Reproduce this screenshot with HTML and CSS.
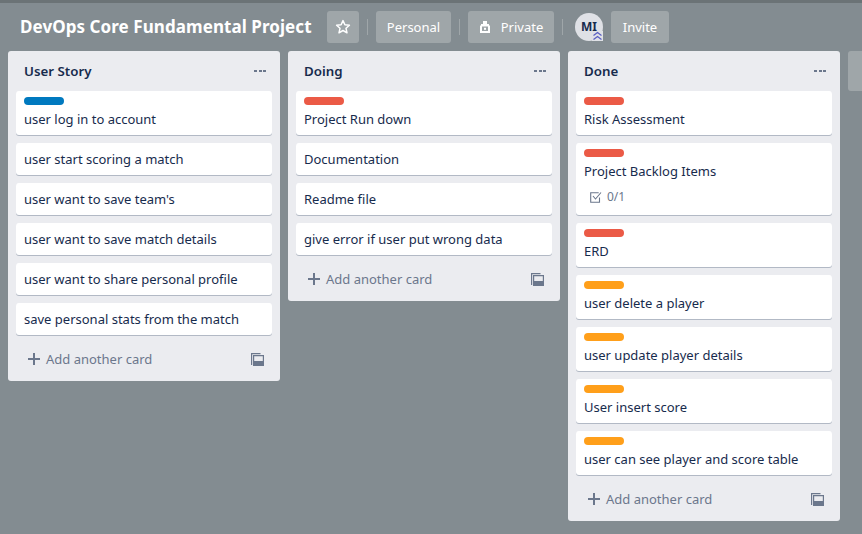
FILE: index.html
```html
<!DOCTYPE html>
<html lang="en">
<head>
    <meta charset="UTF-8">
    <meta name="viewport" content="width=device-width, initial-scale=1.0">
    <title>DevOps Core Fundamental Project</title>
    <link rel="stylesheet" href="styles.css">
</head>
<body>
    <div class="top-strip"></div>

    <div class="board-header">
        <h1 class="board-title">DevOps Core Fundamental Project</h1>
        <button class="header-btn star-btn">
            <svg width="16" height="16" viewBox="0 0 16 16"><path d="M8 1.600l1.900 4.200 4.500.5-3.400 3 1 4.500L8 11.500l-4 2.300 1-4.500-3.400-3 4.500-.5z" fill="none" stroke="#fff" stroke-width="1.500" stroke-linejoin="round"/></svg>
        </button>
        <span class="divider"></span>
        <button class="header-btn personal-btn">Personal</button>
        <span class="divider"></span>
        <button class="header-btn private-btn">
            <svg width="12" height="14" viewBox="0 0 12 14"><path d="M4 1h4v3h2v1.500H11V13H1V5.500h1V4h2z" fill="#fff"/><rect x="3" y="6.500" width="6" height="4.500" fill="#9fa6a9"/><rect x="5" y="7.800" width="2" height="2" fill="#fff"/></svg>
            Private
        </button>
        <span class="divider"></span>
        <div class="avatar">
            MI
            <svg class="avatar-badge" width="11" height="10" viewBox="0 0 11 10"><path d="M1.500 4.500L5.500 1.500l4 3M1.500 8.500l4-3 4 3" fill="none" stroke="#5a5fc4" stroke-width="1.300"/></svg>
        </div>
        <button class="header-btn invite-btn">Invite</button>
    </div>

    <div class="board">
        <div class="list">
            <div class="list-header"><h2>User Story</h2><span class="menu-dots"><i></i><i></i><i></i></span></div>
            <div class="card"><span class="label blue"></span><p>user log in to account</p></div>
            <div class="card"><p>user start scoring a match</p></div>
            <div class="card"><p>user want to save team's</p></div>
            <div class="card"><p>user want to save match details</p></div>
            <div class="card"><p>user want to share personal profile</p></div>
            <div class="card"><p>save personal stats from the match</p></div>
            <div class="add-row">
                <svg class="plus" width="14" height="14" viewBox="0 0 14 14"><path d="M6 1h2v5h5v2H8v5H6V8H1V6h5z" fill="#6b778c"/></svg>
                <span>Add another card</span>
                <svg class="template" width="13" height="13" viewBox="0 0 13 13"><path d="M9.500.600H.600V12M2.600 2.600h9.800v9.800H2.600z" fill="none" stroke="#6b778c" stroke-width="1.200"/><rect x="3" y="8" width="9" height="4" fill="#6b778c"/></svg>
            </div>
        </div>

        <div class="list">
            <div class="list-header"><h2>Doing</h2><span class="menu-dots"><i></i><i></i><i></i></span></div>
            <div class="card"><span class="label red"></span><p>Project Run down</p></div>
            <div class="card"><p>Documentation</p></div>
            <div class="card"><p>Readme file</p></div>
            <div class="card"><p>give error if user put wrong data</p></div>
            <div class="add-row">
                <svg class="plus" width="14" height="14" viewBox="0 0 14 14"><path d="M6 1h2v5h5v2H8v5H6V8H1V6h5z" fill="#6b778c"/></svg>
                <span>Add another card</span>
                <svg class="template" width="13" height="13" viewBox="0 0 13 13"><path d="M9.500.600H.600V12M2.600 2.600h9.800v9.800H2.600z" fill="none" stroke="#6b778c" stroke-width="1.200"/><rect x="3" y="8" width="9" height="4" fill="#6b778c"/></svg>
            </div>
        </div>

        <div class="list">
            <div class="list-header"><h2>Done</h2><span class="menu-dots"><i></i><i></i><i></i></span></div>
            <div class="card"><span class="label red"></span><p>Risk Assessment</p></div>
            <div class="card">
                <span class="label red"></span>
                <p>Project Backlog Items</p>
                <div class="badges">
                    <svg width="12" height="12" viewBox="0 0 12 12"><path d="M9.500 6.500v4.800H.700V1.700h8" fill="none" stroke="#6b778c" stroke-width="1.100"/><path d="M3 5l2.500 3L11 1.500" fill="none" stroke="#6b778c" stroke-width="1.100"/></svg>
                    <span>0/1</span>
                </div>
            </div>
            <div class="card"><span class="label red"></span><p>ERD</p></div>
            <div class="card"><span class="label orange"></span><p>user delete a player</p></div>
            <div class="card"><span class="label orange"></span><p>user update player details</p></div>
            <div class="card"><span class="label orange"></span><p>User insert score</p></div>
            <div class="card"><span class="label orange"></span><p>user can see player and score table</p></div>
            <div class="add-row">
                <svg class="plus" width="14" height="14" viewBox="0 0 14 14"><path d="M6 1h2v5h5v2H8v5H6V8H1V6h5z" fill="#6b778c"/></svg>
                <span>Add another card</span>
                <svg class="template" width="13" height="13" viewBox="0 0 13 13"><path d="M9.500.600H.600V12M2.600 2.600h9.800v9.800H2.600z" fill="none" stroke="#6b778c" stroke-width="1.200"/><rect x="3" y="8" width="9" height="4" fill="#6b778c"/></svg>
            </div>
        </div>

        <div class="add-list"></div>
    </div>
</body>
</html>
```

FILE: styles.css
```css
* {
    box-sizing: border-box;
}

html, body {
    height: 100%;
}

body {
    margin: 0;
    overflow: hidden;
    background-color: #838c91;
    color: #172b4d;
    font-family: "Noto Sans", "Open Sans", sans-serif;
    font-size: 13px;
    line-height: 20px;
}

.top-strip {
    height: 3px;
    background-color: #6b7376;
}

/* board header */
.board-header {
    display: flex;
    align-items: center;
    height: 32px;
    margin-top: 8px;
    padding-left: 20px;
}

.board-title {
    flex: 0 0 307px;
    margin: 0;
    color: #ffffff;
    font-size: 17px;
    font-weight: 700;
    letter-spacing: 0.07px;
    line-height: 32px;
    white-space: nowrap;
}

.header-btn {
    display: flex;
    align-items: center;
    justify-content: center;
    height: 32px;
    padding: 0;
    border: none;
    border-radius: 3px;
    background-color: #9fa6a9;
    color: #ffffff;
    font-family: inherit;
    font-size: 13px;
}

.star-btn {
    width: 32px;
}

.personal-btn {
    width: 75px;
}

.private-btn {
    gap: 10px;
    width: 86px;
}

.invite-btn {
    width: 58px;
}

.divider {
    width: 1px;
    height: 16px;
    margin: 0 8px;
    background-color: #9fa6a9;
}

.avatar {
    position: relative;
    display: flex;
    align-items: center;
    justify-content: center;
    width: 28px;
    height: 28px;
    margin: 0 8px 0 4px;
    border-radius: 50%;
    background-color: #dfe1e6;
    font-size: 12px;
    font-weight: 700;
}

.avatar-badge {
    position: absolute;
    right: 0;
    bottom: 0;
    background-color: #dfe1e6;
}

/* lists */
.board {
    display: flex;
    align-items: flex-start;
    gap: 8px;
    margin-top: 8px;
    padding-left: 8px;
}

.list {
    flex: 0 0 272px;
    padding: 0 8px;
    border-radius: 3px;
    background-color: #ebecf0;
}

.list-header {
    display: flex;
    align-items: center;
    justify-content: space-between;
    height: 40px;
    padding: 0 6px 0 8px;
}

.list-header h2 {
    margin: 0;
    font-size: 13.300px;
    font-weight: 600;
    line-height: 20px;
}

.menu-dots {
    display: flex;
    gap: 1.500px;
}

.menu-dots i {
    width: 3px;
    height: 2px;
    background-color: #6b778c;
}

.card {
    margin-bottom: 8px;
    padding: 6px 8px;
    border-radius: 3px;
    background-color: #ffffff;
    box-shadow: 0 1px 0 rgba(9, 30, 66, 0.25);
}

.card p {
    margin: 0;
}

.label {
    display: block;
    width: 40px;
    height: 8px;
    margin-bottom: 4px;
    border-radius: 4px;
}

.blue {
    background-color: #0079bf;
}

.red {
    background-color: #eb5a46;
}

.orange {
    background-color: #ff9f1a;
}

.badges {
    display: flex;
    align-items: center;
    gap: 5px;
    height: 24px;
    margin-top: 4px;
    padding-left: 6px;
    color: #6b778c;
    font-size: 12px;
}

.add-row {
    display: flex;
    align-items: center;
    height: 32px;
    margin-bottom: 6px;
    padding: 0 8px 0 11px;
    color: #6b778c;
}

.add-row span {
    flex: 1;
    margin-left: 5px;
}

.add-list {
    flex: 1;
    height: 40px;
    border-radius: 3px 0 0 3px;
    background-color: #9fa6a9;
}
```
